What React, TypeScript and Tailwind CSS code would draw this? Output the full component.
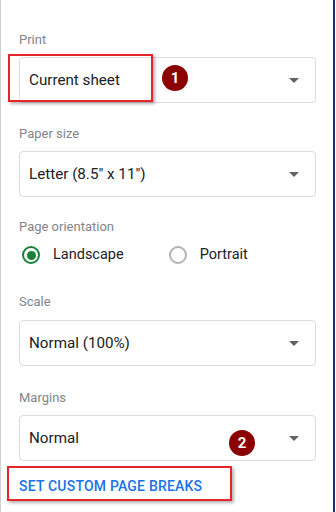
import React from 'react';

const Caret: React.FC = () => (
    <svg width="10" height="5" viewBox="0 0 10 5" className="shrink-0">
        <path d="M0 0 L10 0 L5 5 Z" fill="#5f6368" />
    </svg>
);

const Select: React.FC<{ value: string }> = ({ value }) => (
    <div className="flex h-[46px] items-center justify-between rounded-[4px] border border-[#dadce0] bg-white pl-[9px] pr-[16px]">
        <span className="text-[15.2px] text-[#202124]">{value}</span>
        <Caret />
    </div>
);

const Label: React.FC<{ text: string }> = ({ text }) => (
    <div className="text-[13px] leading-4 text-[#80868b]">{text}</div>
);

const Badge: React.FC<{ n: string; className: string }> = ({ n, className }) => (
    <div className={`absolute flex h-[26px] w-[26px] items-center justify-center rounded-full bg-[#8b0000] text-[15px] font-bold text-white ${className}`}>
        {n}
    </div>
);

const Radio: React.FC<{ label: string; checked?: boolean }> = ({ label, checked }) => (
    <div className="flex items-center gap-[13px]">
        <div className={`flex h-[18px] w-[18px] items-center justify-center rounded-full border-2 ${checked ? 'border-[#188038]' : 'border-[#b0b3b8]'}`}>
            {checked && <div className="h-[9px] w-[9px] rounded-full bg-[#188038]" />}
        </div>
        <span className="text-[14.5px] text-[#202124]">{label}</span>
    </div>
);

const App: React.FC = () => {
    return (
        <div className="relative h-[512px] w-[336px] overflow-hidden bg-white font-['Roboto',sans-serif]">
            <div className="h-full w-[335px] border-l border-r-2 border-l-[#d0d0d0] border-r-[#1c2f6b] pl-[18px] pr-[17px] pt-[32px]">
                <Label text="Print" />
                <div className="mt-[9px]">
                    <Select value="Current sheet" />
                </div>

                <div className="mt-[23px]">
                    <Label text="Paper size" />
                </div>
                <div className="mt-[9px]">
                    <Select value={'Letter (8.5" x 11")'} />
                </div>

                <div className="mt-[22px]">
                    <Label text="Page orientation" />
                </div>
                <div className="mt-[8px] flex h-[24px] items-center gap-[45px] pl-[3px]">
                    <Radio label="Landscape" checked />
                    <Radio label="Portrait" />
                </div>

                <div className="mt-[27px]">
                    <Label text="Scale" />
                </div>
                <div className="mt-[10px]">
                    <Select value="Normal (100%)" />
                </div>

                <div className="mt-[24px]">
                    <Label text="Margins" />
                </div>
                <div className="mt-[9px]">
                    <Select value="Normal" />
                </div>

                <div className="mt-[17px] text-[14px] font-medium leading-4 tracking-[0.2px] text-[#1a73e8]">
                    SET CUSTOM PAGE BREAKS
                </div>
            </div>

            {/* callout overlays */}
            <div className="absolute left-[8px] top-[54px] h-[48px] w-[145px] border-2 border-[#e8242b] shadow-[2px_2px_3px_rgba(0,0,0,0.3)]" />
            <Badge n="1" className="left-[162px] top-[65px]" />
            <div className="absolute left-[7px] top-[466px] h-[35px] w-[225px] border-2 border-[#e8242b] shadow-[2px_2px_3px_rgba(0,0,0,0.3)]" />
            <Badge n="2" className="left-[229px] top-[430px]" />
        </div>
    );
};

export default App;
